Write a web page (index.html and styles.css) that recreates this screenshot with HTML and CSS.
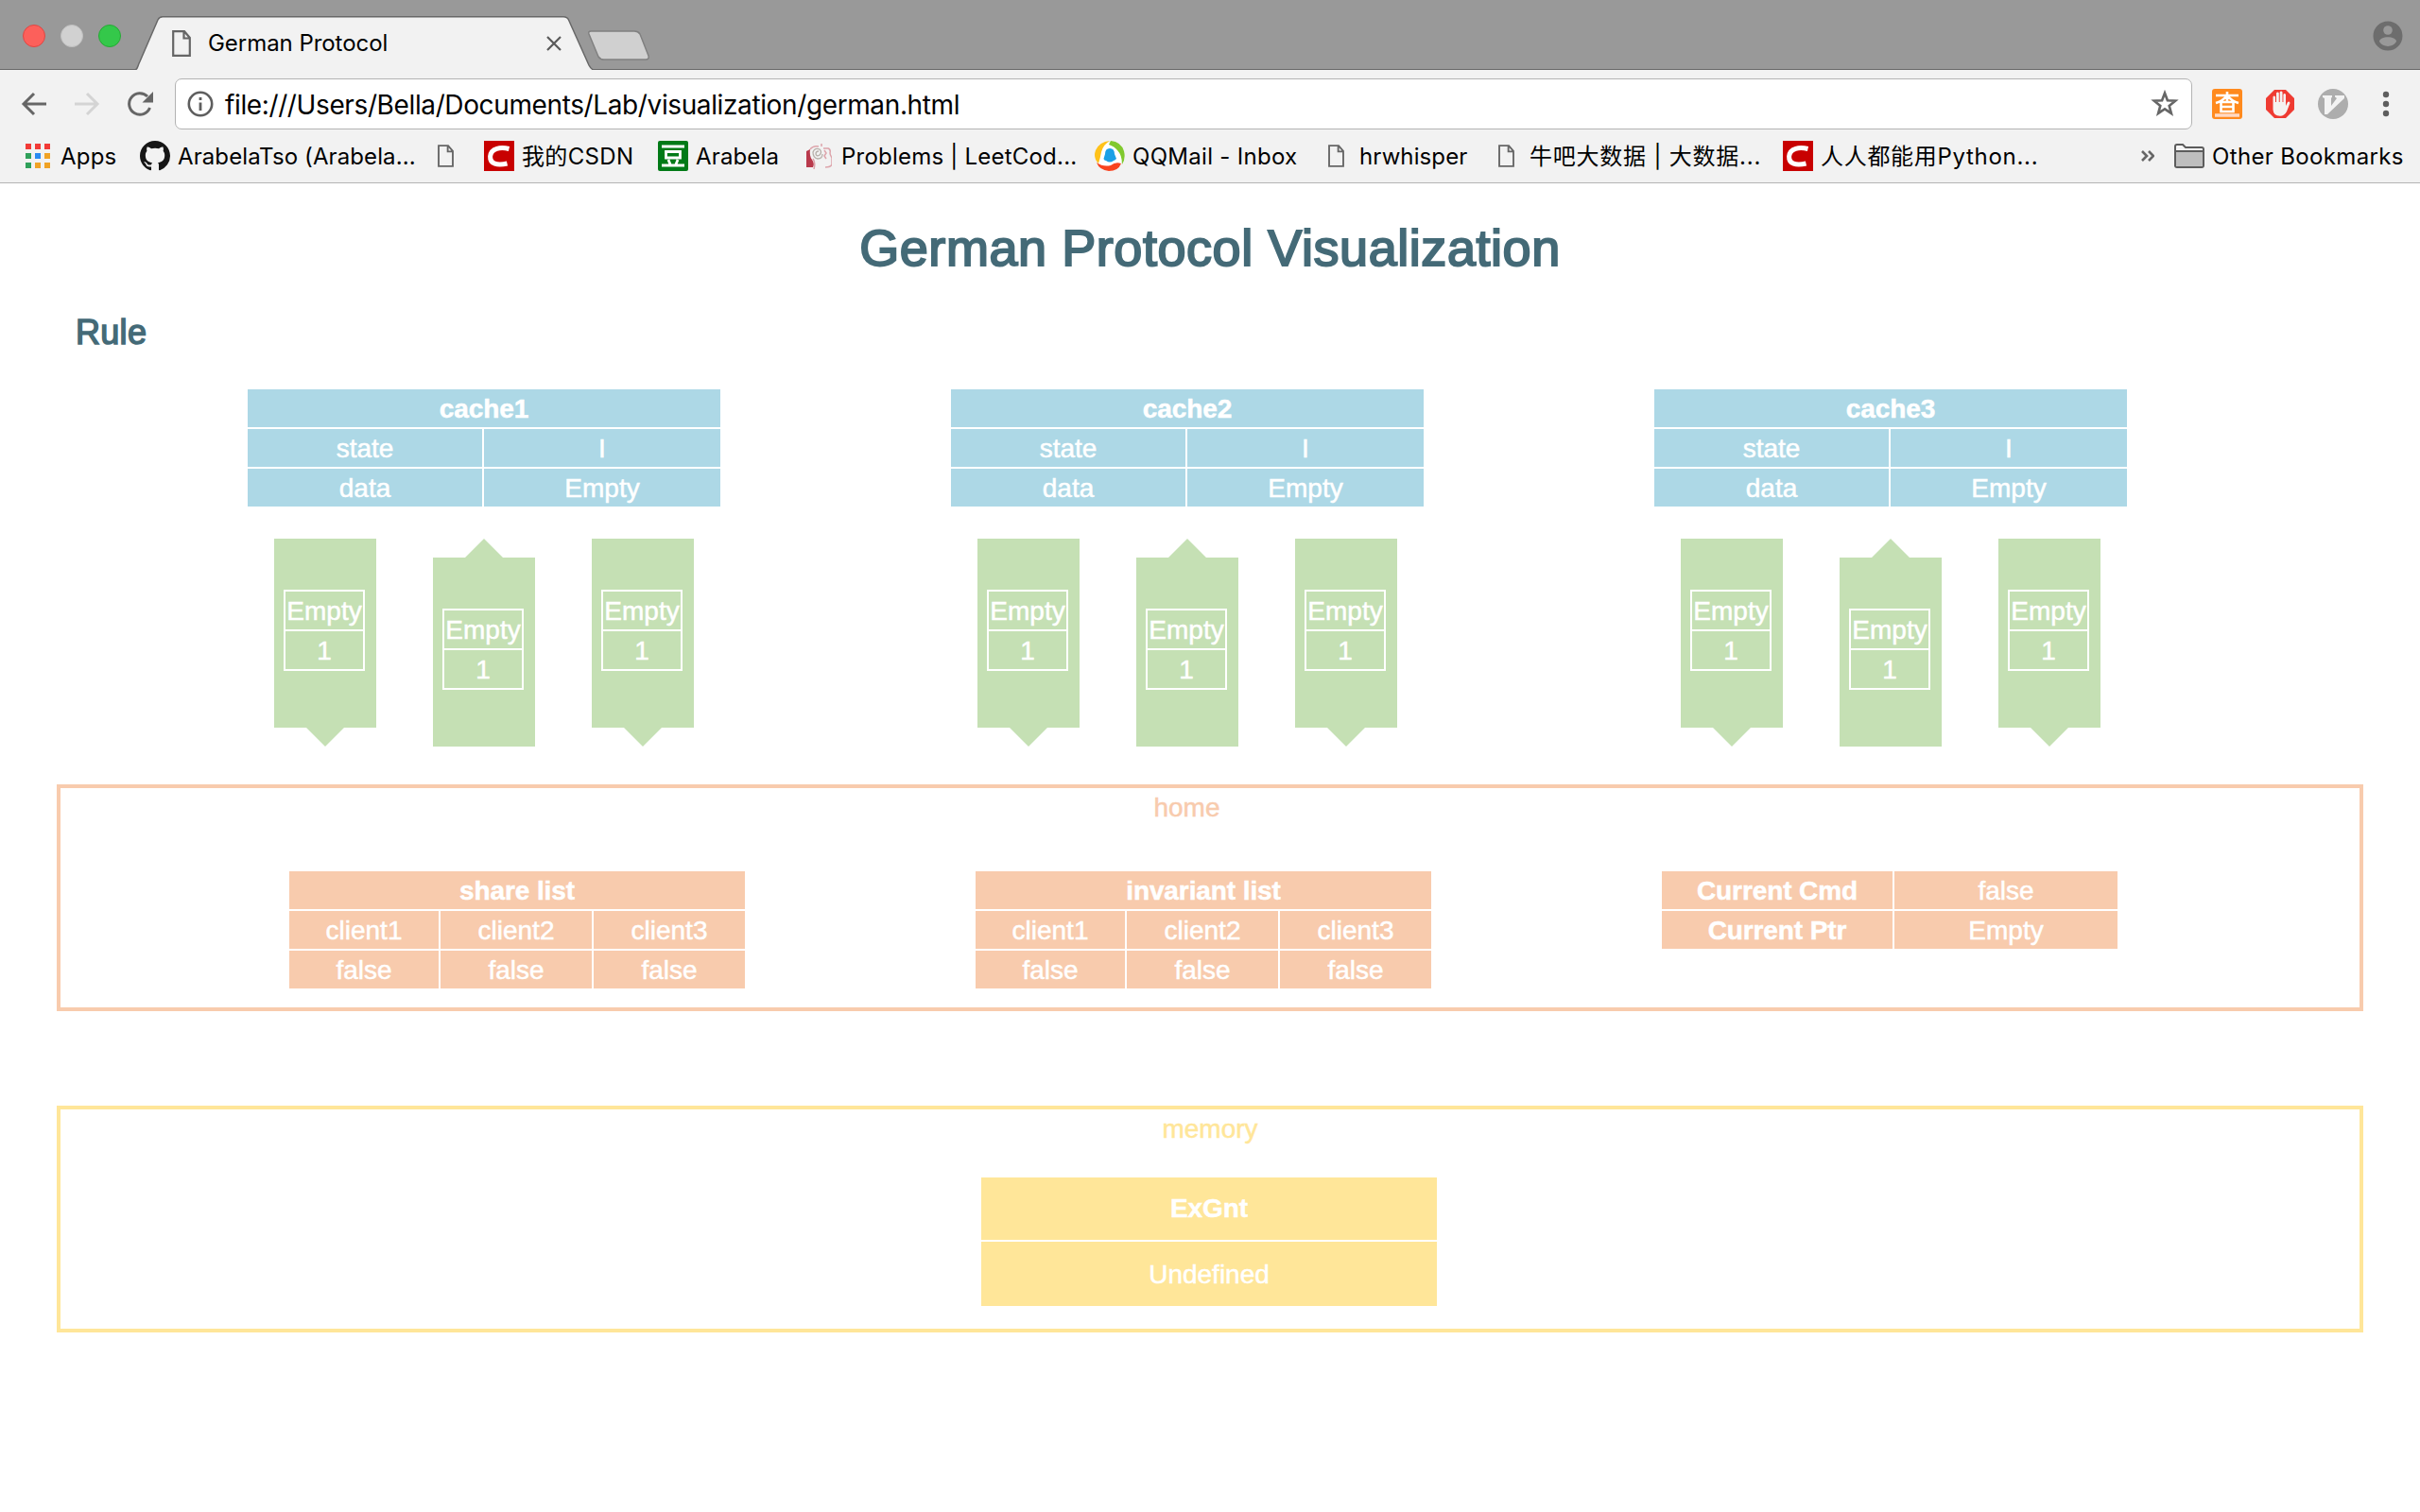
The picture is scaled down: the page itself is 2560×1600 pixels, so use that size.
FILE: index.html
```html
<!DOCTYPE html>
<html lang="en">
<head>
<meta charset="utf-8">
<title>German Protocol</title>
<link rel="stylesheet" href="styles.css">
</head>
<body>
<svg class="defs" width="0" height="0">
  <symbol id="doc" viewBox="0 0 20 28"><path d="M1.2 1.2H13L18.8 8V26.8H1.2ZM12.5 1.5V8.5H18.5" fill="none" stroke="#666" stroke-width="2.2"/></symbol>
  <symbol id="csdn" viewBox="0 0 32 32"><path d="M0 0H32V32H0Z" fill="#c80000"/><path d="M26.500 8.500C18 6.400 7.300 7.400 6.600 16.500C6.200 24.500 14 26.500 24.500 24" fill="none" stroke="#fff" stroke-width="5"/></symbol>
</svg>

<header class="browser">
  <div class="tabstrip">
    <div class="lights"><i class="light red"></i><i class="light grey"></i><i class="light green"></i></div>
    <div class="tab">
      <svg class="tab-shape" viewBox="0 0 486 57"><path d="M1 57C4 56 3 54 6 48L25 4Q26.500 .8 30 .8H454Q458 .8 459.500 4L481 52Q483 56 486 57" fill="#f2f2f2" stroke="#686868" stroke-width="1.500"/></svg>
      <svg class="tab-doc"><use href="#doc"/></svg>
      <span class="tab-title">German Protocol</span>
      <svg class="tab-close" viewBox="0 0 16 16"><path d="M1 1L15 15M15 1L1 15" stroke="#5a5a5a" stroke-width="2.200"/></svg>
    </div>
    <svg class="newtab" viewBox="0 0 68 34"><path d="M4 1H50Q54 1 56 4L65 27Q66 31 62 31H18Q14 31 12 28L2 4Q1 1 4 1Z" fill="#d0d0d0" stroke="#808080" stroke-width="1.500"/></svg>
    <svg class="profile" viewBox="0 0 32 32"><circle cx="16" cy="16" r="15.500" fill="#6d6d6d"/><circle cx="16" cy="10" r="4.800" fill="#999"/><path d="M7 22C7 15.500 25 15.500 25 22C21 28.500 11 28.500 7 22Z" fill="#999"/></svg>
  </div>

  <div class="navbar">
    <svg class="nav-icon back" viewBox="0 0 28 28"><path d="M27 14H3M14 3L3 14L14 25" fill="none" stroke="#666" stroke-width="3"/></svg>
    <svg class="nav-icon forward" viewBox="0 0 28 28"><path d="M1 14H25M14 3L25 14L14 25" fill="none" stroke="#d4d4d4" stroke-width="3"/></svg>
    <svg class="nav-icon reload" viewBox="0 0 28 28"><path d="M24.500 18A11.300 11.300 0 1 1 22 6" fill="none" stroke="#666" stroke-width="3"/><path d="M28 1V12.500H16.500Z" fill="#666"/></svg>
    <div class="address">
      <svg class="info" viewBox="0 0 28 28"><circle cx="14" cy="14" r="12.200" fill="none" stroke="#5e5e5e" stroke-width="2.600"/><path d="M14 7V10M14 12.500V21" stroke="#5e5e5e" stroke-width="2.800"/></svg>
      <span class="url">file:///Users/Bella/Documents/Lab/visualization/german.html</span>
      <svg class="star" viewBox="0 0 30 30"><path d="M15 3.500L17.900 11.300L26.200 11.700L19.700 16.900L21.900 24.900L15 20.300L8.100 24.900L10.300 16.900L3.800 11.700L12.100 11.300Z" fill="none" stroke="#666" stroke-width="2.600"/></svg>
    </div>
    <svg class="ext cha" viewBox="0 0 32 32"><rect width="32" height="32" rx="3" fill="#ff8a1e"/><path d="M4 7H28M16 3V14M15 8Q11 13 4 15M17 8Q21 13 28 15M9.500 14H22.500V24H9.500ZM10 19H22" fill="none" stroke="#fff" stroke-width="2.600"/><path d="M3 28H29" stroke="#ffd9c4" stroke-width="3.500"/></svg>
    <svg class="ext hand" viewBox="0 0 32 32"><path d="M10 1H22L31 10V22L22 31H10L1 22V10Z" fill="#ef3b32"/><path d="M8.500 18V8.500Q9.700 6.500 11 8.500V14H12V4.500Q13.500 2.500 14.800 4.500V14H15.700V3.500Q17 1.500 18.500 3.500V14H19.400V6Q20.600 4 22 6V18L24 14Q26 12.500 26.500 15L23 24Q20.500 28.800 16 28.800Q9 28.800 8.500 22Z" fill="#f5f2f1"/></svg>
    <svg class="ext vim" viewBox="0 0 32 32"><circle cx="16" cy="16" r="16" fill="#adadad"/><path d="M5 7H15V8.500L14 10V18L20 10L18 8.500V7H28V10L10 27H7V10L5 9Z" fill="#f3f3f3"/></svg>
    <svg class="menu" viewBox="0 0 8 28"><circle cx="4" cy="4" r="3.200" fill="#5e5e5e"/><circle cx="4" cy="14" r="3.200" fill="#5e5e5e"/><circle cx="4" cy="24" r="3.200" fill="#5e5e5e"/></svg>
  </div>

  <nav class="bookmarks">
    <a class="bm apps"><svg viewBox="0 0 26 26"><path d="M0 0h6v6H0zM10 0h6v6h-6zM20 0h6v6h-6z" fill="#f23b37"/><path d="M0 10h6v6H0zM0 20h6v6H0z" fill="#2fa05a"/><path d="M10 10h6v6h-6z" fill="#2a8bf2"/><path d="M20 10h6v6h-6zM10 20h6v6h-6zM20 20h6v6h-6z" fill="#f0a326"/></svg><span>Apps</span></a>
    <a class="bm github"><svg viewBox="0 0 16 16"><path fill="#161616" d="M8 0C3.580 0 0 3.580 0 8c0 3.540 2.290 6.530 5.470 7.590.4.070.55-.17.55-.38 0-.19-.01-.82-.01-1.490-2.010.37-2.530-.49-2.690-.94-.09-.23-.48-.94-.82-1.130-.28-.15-.68-.52-.01-.53.63-.01 1.080.58 1.230.82.720 1.210 1.870.87 2.330.66.070-.52.28-.87.51-1.070-1.780-.2-3.640-.89-3.640-3.950 0-.87.31-1.590.82-2.150-.08-.2-.36-1.020.08-2.120 0 0 .67-.21 2.200.82.640-.18 1.320-.27 2-.27s1.360.09 2 .27c1.530-1.040 2.200-.82 2.200-.82.440 1.100.16 1.920.08 2.120.51.56.82 1.270.82 2.150 0 3.070-1.870 3.750-3.650 3.950.29.25.54.73.54 1.480 0 1.070-.01 1.930-.01 2.200 0 .21.15.46.55.38A8.010 8.010 0 0 0 16 8c0-4.420-3.580-8-8-8z"/></svg><span>ArabelaTso (Arabela...</span></a>
    <a class="bm page blank"><svg><use href="#doc"/></svg></a>
    <a class="bm csdn"><svg><use href="#csdn"/></svg><span>我的CSDN</span></a>
    <a class="bm douban"><svg viewBox="0 0 32 32"><rect width="32" height="32" rx="2" fill="#007a17"/><path d="M4 6H28M4 26H28M8.500 11.500H23.500V18H8.500ZM11 20L13 25M21 20L19 25" fill="none" stroke="#fff" stroke-width="2.800"/></svg><span>Arabela</span></a>
    <a class="bm leet"><svg viewBox="0 0 28 28"><path d="M1 9V26H8Q10 22 7 18Q4 14 5 7Z" fill="#b93a4c"/><path d="M5 7Q8 3 14 4M8 17Q11 21 9 28" fill="none" stroke="#dda4ab" stroke-width="1.500"/><path d="M14 9Q11 9 11 12Q12 15 15 13Q18 10 15 7Q10 5 8 10Q8 16 13 17Q18 17 18 12" fill="none" stroke="#b7b0aa" stroke-width="1.300"/><path d="M19 6H24Q27 7 26 11Q26 13 28 16V23Q27 26 21 26M20 8L22 11L20 14L22 17M17 1V4" fill="none" stroke="#dda4ab" stroke-width="1.500"/></svg><span>Problems | LeetCod...</span></a>
    <a class="bm qq"><svg viewBox="0 0 32 32"><circle cx="16" cy="16" r="14" fill="#fff"/><path d="M16 0Q9 4 7 12Q6 18 4 24Q-2 18 1 10Q5 1 16 0Z" fill="#ffc21a"/><path d="M17 0Q28 1 31 11Q33 19 29 25Q29 15 24 10Q21 6 15 4Z" fill="#80c92e"/><path d="M2 23Q9 28 17 26Q22 22 28 24Q25 32 15 32Q5 31 2 23Z" fill="#f9431f"/><path d="M11 14Q11 8 16 8Q21 8 21 14L23 19Q21 21 20 21Q16 24 12 21Q10 21 9.500 19Z" fill="#1ba0e6"/></svg><span>QQMail - Inbox</span></a>
    <a class="bm page hrw"><svg><use href="#doc"/></svg><span>hrwhisper</span></a>
    <a class="bm page niuba"><svg><use href="#doc"/></svg><span>牛吧大数据 | 大数据...</span></a>
    <a class="bm python"><svg><use href="#csdn"/></svg><span>人人都能用Python...</span></a>
    <svg class="more" viewBox="0 0 14 12"><path d="M1 1L6 6L1 11M8 1L13 6L8 11" fill="none" stroke="#666" stroke-width="2.600"/></svg>
    <a class="bm other"><svg viewBox="0 0 32 26"><path d="M1 24V3Q1 1 3 1H9L12 4H29Q31 4 31 6V23Q31 25 29 25H3Q1 25 1 23Z" fill="#f5f5f5" stroke="#5c5c5c" stroke-width="2"/><path d="M2 8H30V24H2Z" fill="#bebebe"/><path d="M1 8H31" stroke="#5c5c5c" stroke-width="2"/></svg><span>Other Bookmarks</span></a>
  </nav>
</header>

<main class="page-body">
  <h1>German Protocol Visualization</h1>
  <h2>Rule</h2>

  <div class="caches">
    <section class="cache">
      <div class="grid two blue"><b class="full">cache1</b><span>state</span><span>I</span><span>data</span><span>Empty</span></div>
      <div class="channels">
        <div class="channel down"><div class="msg"><span>Empty</span><span>1</span></div></div>
        <div class="channel up"><div class="msg"><span>Empty</span><span>1</span></div></div>
        <div class="channel down"><div class="msg"><span>Empty</span><span>1</span></div></div>
      </div>
    </section>
    <section class="cache">
      <div class="grid two blue"><b class="full">cache2</b><span>state</span><span>I</span><span>data</span><span>Empty</span></div>
      <div class="channels">
        <div class="channel down"><div class="msg"><span>Empty</span><span>1</span></div></div>
        <div class="channel up"><div class="msg"><span>Empty</span><span>1</span></div></div>
        <div class="channel down"><div class="msg"><span>Empty</span><span>1</span></div></div>
      </div>
    </section>
    <section class="cache">
      <div class="grid two blue"><b class="full">cache3</b><span>state</span><span>I</span><span>data</span><span>Empty</span></div>
      <div class="channels">
        <div class="channel down"><div class="msg"><span>Empty</span><span>1</span></div></div>
        <div class="channel up"><div class="msg"><span>Empty</span><span>1</span></div></div>
        <div class="channel down"><div class="msg"><span>Empty</span><span>1</span></div></div>
      </div>
    </section>
  </div>

  <section class="box home">
    <div class="label">home</div>
    <div class="home-tables">
      <div class="grid three orange"><b class="full">share list</b><span>client1</span><span>client2</span><span>client3</span><span>false</span><span>false</span><span>false</span></div>
      <div class="grid three orange"><b class="full">invariant list</b><span>client1</span><span>client2</span><span>client3</span><span>false</span><span>false</span><span>false</span></div>
      <div class="grid current orange"><b>Current Cmd</b><span>false</span><b>Current Ptr</b><span>Empty</span></div>
    </div>
  </section>

  <section class="box memory">
    <div class="label">memory</div>
    <div class="grid mem yellow"><b>ExGnt</b><span>Undefined</span></div>
  </section>
</main>
</body>
</html>
```
FILE: styles.css
```css
* { box-sizing: border-box; }
body { margin: 0; width: 2560px; height: 1600px; overflow: hidden; background: #fff; font-family: "Liberation Sans", Arial, sans-serif; }
svg { display: block; flex: none; }
.defs { position: absolute; }

/* Browser chrome */
.browser { height: 194px; background: #f2f2f2; border-bottom: 1px solid #b4b4b4; font-family: Inter, "Noto Sans CJK SC", sans-serif; color: #000; }
.tabstrip { height: 74px; background: #999; border-bottom: 1px solid #686868; display: flex; align-items: flex-start; }
.lights { display: flex; gap: 16px; padding: 26px 0 0 24px; width: 142px; }
.light { width: 24px; height: 24px; border-radius: 50%; }
.red { background: #fc605b; border: 1px solid #de4643; }
.grey { background: #d1d1d1; border: 1px solid #c0c0c0; }
.green { background: #34c84a; border: 1px solid #27a935; }
.tab { position: relative; width: 486px; height: 57px; margin-top: 17px; display: flex; align-items: center; }
.tab-shape { position: absolute; left: 0; top: 0; width: 486px; height: 57px; }
.tab-doc { position: relative; width: 20px; height: 28px; margin-left: 40px; }
.tab-title { position: relative; margin-left: 18px; width: 358px; font-size: 24px; line-height: 30px; letter-spacing: -0.05px; }
.tab-close { position: relative; width: 16px; height: 16px; }
.newtab { width: 68px; height: 34px; margin: 32px 0 0 -7px; }
.profile { width: 32px; height: 32px; margin: 22px 18px 0 auto; }

.navbar { height: 72px; display: flex; align-items: center; }
.nav-icon { width: 28px; height: 28px; }
.back { margin-left: 22px; }
.forward { margin-left: 28px; }
.reload { margin: 0 23px 0 28px; }
.address { width: 2134px; height: 54px; background: #fff; border: 1px solid #b3b3b3; border-radius: 7px; display: flex; align-items: center; }
.info { width: 28px; height: 28px; margin-left: 12px; }
.url { margin-left: 12px; padding-top: 2px; font-size: 28px; line-height: 36px; letter-spacing: -0.38px; white-space: nowrap; }
.star { width: 30px; height: 30px; margin: 0 13px 0 auto; }
.ext { width: 32px; height: 32px; }
.cha { margin-left: 21px; }
.hand { margin-left: 24px; }
.vim { margin-left: 24px; }
.menu { width: 8px; height: 28px; margin-left: 36px; }

.bookmarks { height: 38px; display: flex; align-items: center; padding-left: 27px; font-size: 24px; line-height: 34px; white-space: nowrap; }
.bm { display: flex; align-items: center; }
.bm svg { width: 32px; height: 32px; }
.bm span { margin-left: 8px; padding-top: 2px; }
.page svg { width: 17px; height: 24px; }
.page span { margin-left: 16px; }
.apps { width: 121px; }
.apps svg { width: 26px; height: 26px; }
.apps span { margin-left: 11px; letter-spacing: 0.2px; }
.github { width: 315px; letter-spacing: 0.1px; }
.blank { width: 49px; }
.csdn { width: 184px; letter-spacing: 0.35px; }
.douban { width: 156px; letter-spacing: 0.15px; }
.leet { width: 306px; letter-spacing: 0.22px; }
.leet svg { width: 28px; height: 28px; }
.leet span { margin-left: 10px; }
.qq { width: 247px; letter-spacing: 0.3px; }
.hrw { width: 180px; letter-spacing: 0.1px; }
.niuba { width: 301px; letter-spacing: 0.78px; }
.python { width: 379px; letter-spacing: 0.7px; }
.more { width: 14px; height: 12px; margin-right: 21px; }
.other { letter-spacing: 0.35px; }
.other svg { height: 26px; }

/* Page */
.page-body { padding: 0 60px; font-size: 28px; line-height: 42px; -webkit-text-stroke-width: 0.5px; }
h1, h2 { margin: 0; color: #446a77; font-weight: 400; }
h1 { padding-top: 38px; font-size: 54px; line-height: 60px; letter-spacing: 0.56px; text-align: center; -webkit-text-stroke-width: 2px; }
h2 { padding: 40px 0 0 20px; font-size: 36px; line-height: 40px; letter-spacing: 0.3px; -webkit-text-stroke-width: 1.5px; }

.grid { display: grid; gap: 2px; grid-auto-rows: 40px; text-align: center; color: #fff; }
.grid b { letter-spacing: -0.1px; }
.full { grid-column: 1 / -1; }
.two { grid-template-columns: 248px 250px; }
.three { grid-template-columns: 158px 160px 160px; }
.current { grid-template-columns: 244px 236px; }
.blue > * { background: #add8e6; }
.orange > * { background: #f8cbad; }
.yellow > * { background: #ffe699; }

.caches { display: flex; gap: 244px; padding-left: 202px; margin-top: 40px; }
.cache { width: 500px; }
.channels { display: flex; gap: 60px; padding-left: 28px; margin-top: 34px; }
.channel { width: 108px; height: 220px; background: #c5e0b4; color: #fff; text-align: center; padding-left: 10px; }
.down { padding-top: 54px; clip-path: polygon(0 0, 100% 0, 100% 200px, 74px 200px, 54px 220px, 34px 200px, 0 200px); }
.up { padding-top: 74px; clip-path: polygon(0 20px, 34px 20px, 54px 0, 74px 20px, 100% 20px, 100% 100%, 0 100%); }
.msg { width: 86px; height: 86px; border: 2px solid #fff; display: grid; grid-template-rows: 40px 40px; gap: 2px; background: linear-gradient(#fff, #fff) 0 40px / 100% 2px no-repeat; }

.box { height: 240px; border: 4px solid; }
.label { height: 40px; text-align: center; }
.home { margin-top: 40px; border-color: #f8cbad; color: #f8cbad; }
.home .label { padding-right: 49px; }
.home-tables { display: flex; align-items: flex-start; gap: 244px; padding: 48px 0 0 242px; }
.memory { margin-top: 100px; border-color: #ffe699; color: #ffe699; }
.mem { width: 482px; margin: 32px 0 0 974px; grid-template-rows: 66px 68px; line-height: 66px; }
.mem span { line-height: 70px; }
```
